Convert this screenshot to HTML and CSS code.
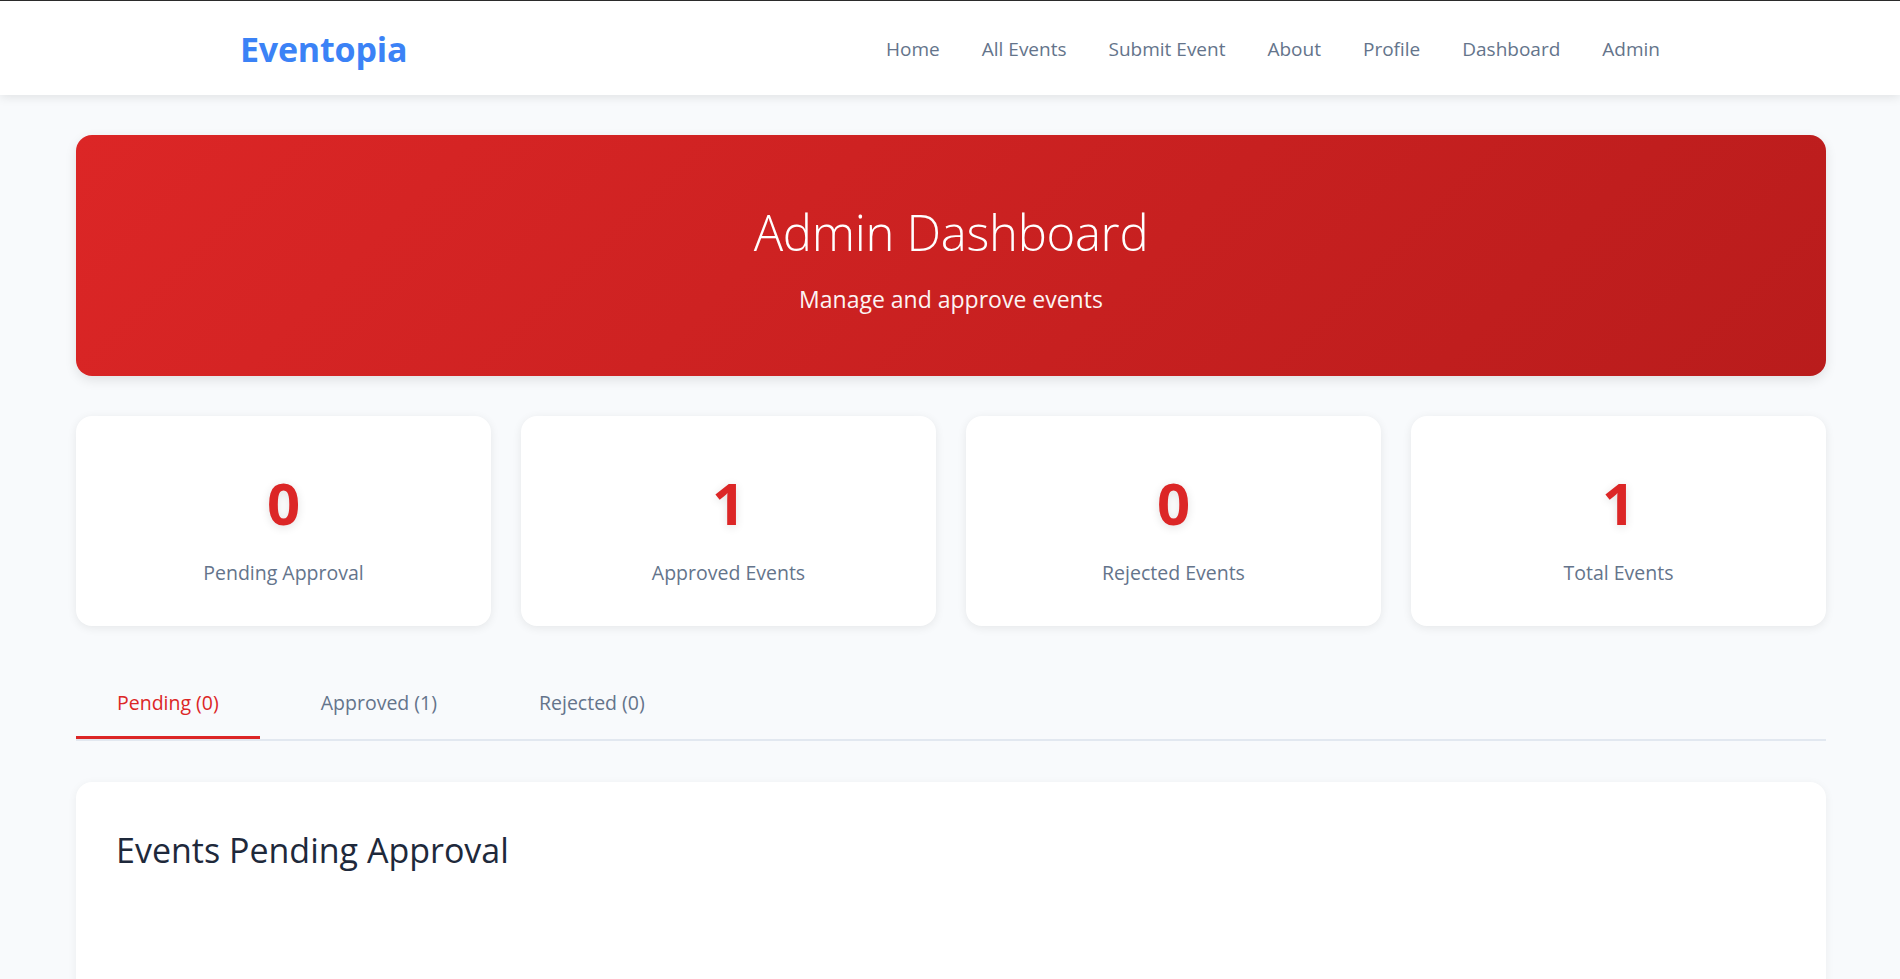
FILE: index.html
```html
<!DOCTYPE html>
<html lang="en">
<head>
<meta charset="utf-8">
<title>Eventopia - Admin Dashboard</title>
<link rel="stylesheet" href="styles.css">
</head>
<body>
<header class="site-header">
  <div class="header-inner">
    <a class="logo" href="#">Eventopia</a>
    <nav class="main-nav">
      <a href="#">Home</a>
      <a href="#">All Events</a>
      <a href="#">Submit Event</a>
      <a href="#">About</a>
      <a href="#">Profile</a>
      <a href="#">Dashboard</a>
      <a href="#">Admin</a>
    </nav>
  </div>
</header>
<main class="page">
  <section class="hero">
    <h1 class="hero-title">Admin Dashboard</h1>
    <p class="hero-subtitle">Manage and approve events</p>
  </section>

  <section class="stats">
    <div class="stat-card">
      <div class="stat-value">0</div>
      <div class="stat-label">Pending Approval</div>
    </div>
    <div class="stat-card">
      <div class="stat-value">1</div>
      <div class="stat-label">Approved Events</div>
    </div>
    <div class="stat-card">
      <div class="stat-value">0</div>
      <div class="stat-label">Rejected Events</div>
    </div>
    <div class="stat-card">
      <div class="stat-value">1</div>
      <div class="stat-label">Total Events</div>
    </div>
  </section>

  <div class="tabs">
    <button class="tab tab-active">Pending (0)</button>
    <button class="tab">Approved (1)</button>
    <button class="tab">Rejected (0)</button>
  </div>

  <section class="panel">
    <h2 class="panel-title">Events Pending Approval</h2>
  </section>
</main>
</body>
</html>
```

FILE: styles.css
```css
* {
  box-sizing: border-box;
}

html, body {
  margin: 0;
  padding: 0;
}

body {
  background: #f8fafc;
  font-family: "Open Sans", "Noto Sans", sans-serif;
  color: #1e293b;
  border-top: 1px solid #2b2b2b;
}

.site-header {
  background: #ffffff;
  box-shadow: 0 2px 10px rgba(0, 0, 0, 0.1);
  position: relative;
  z-index: 1;
}

.header-inner {
  max-width: 1420px;
  height: 94px;
  margin: 0 auto;
  padding-top: 2px;
  display: flex;
  align-items: center;
  justify-content: space-between;
}

.logo {
  font-size: 34px;
  font-weight: 700;
  color: #3b82f6;
  text-decoration: none;
  letter-spacing: -0.2px;
  line-height: 1;
}

.main-nav {
  display: flex;
  gap: 42px;
}

.main-nav a {
  font-size: 19px;
  color: #64748b;
  text-decoration: none;
  line-height: 28px;
}

.page {
  padding: 40px 74px 0 76px;
}

.hero {
  background: linear-gradient(135deg, #dc2626 0%, #b91c1c 100%);
  border-radius: 16px;
  box-shadow: 0 4px 12px rgba(0, 0, 0, 0.1);
  color: #ffffff;
  text-align: center;
  padding: 69px 20px 61px;
}

.hero-title {
  margin: 0 0 23px;
  font-size: 49px;
  font-weight: 300;
  line-height: 56px;
  letter-spacing: -0.3px;
}

.hero-subtitle {
  margin: 0;
  font-size: 23px;
  line-height: 32px;
  opacity: 0.95;
}

.stats {
  margin-top: 40px;
  display: grid;
  grid-template-columns: repeat(4, 1fr);
  gap: 30px;
}

.stat-card {
  background: #ffffff;
  border-radius: 16px;
  box-shadow: 0 2px 10px rgba(0, 0, 0, 0.08);
  text-align: center;
  padding: 52px 20px 39px;
}

.stat-value {
  font-size: 58px;
  font-weight: 700;
  line-height: 70px;
  color: #dc2626;
  text-shadow: 0 2px 10px rgba(0, 0, 0, 0.12);
  margin-bottom: 21px;
}

.stat-label {
  font-size: 19.5px;
  line-height: 28px;
  color: #64748b;
}

.tabs {
  margin-top: 42px;
  display: flex;
  gap: 20px;
  border-bottom: 2px solid #e2e8f0;
}

.tab {
  font-family: inherit;
  font-size: 19.5px;
  line-height: 28px;
  color: #64748b;
  background: none;
  border: none;
  border-bottom: 3px solid transparent;
  padding: 21px 41px 19px;
  cursor: pointer;
}

.tab-active {
  color: #dc2626;
  border-bottom-color: #dc2626;
}

.panel {
  margin-top: 41px;
  background: #ffffff;
  border-radius: 16px;
  box-shadow: 0 2px 10px rgba(0, 0, 0, 0.06);
  padding: 46px 40px 44px;
  min-height: 420px;
}

.panel-title {
  margin: 0;
  font-size: 34px;
  font-weight: 400;
  line-height: 44px;
  color: #1e293b;
}
```
